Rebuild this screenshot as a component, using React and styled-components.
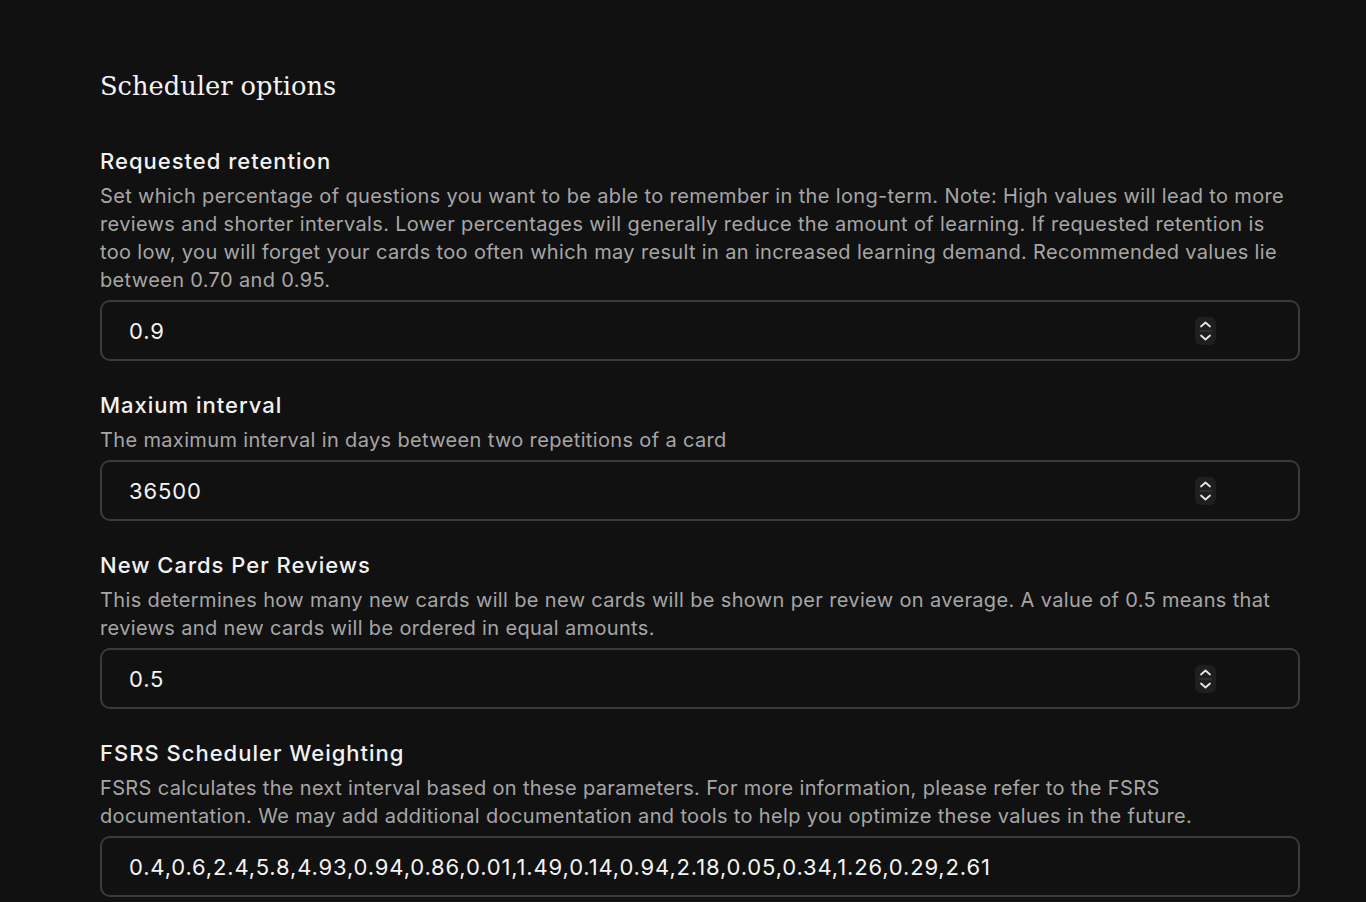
import styled, { createGlobalStyle } from "styled-components"

const GlobalStyle = createGlobalStyle`
   html, body {
      margin: 0;
      background: #111111;
   }
   body {
      font-family: Inter, "Noto Sans", sans-serif;
      color: #f2f2f2;
   }
`;

const Page = styled.div`
   min-height: 902px;
   padding: 66px 0 0 100px;
   box-sizing: border-box;
   background: #111111;
`;

const Content = styled.div`
   width: 1200px;
   display: flex;
   flex-direction: column;
   gap: 29px;
`;

const Heading = styled.h2`
   margin: 0 0 11px 0;
   font-family: "DejaVu Serif", "Liberation Serif", serif;
   font-weight: normal;
   font-size: 25.7px;
   line-height: 40px;
   color: #f4f4f4;
`;

const Field = styled.div`
   display: flex;
   flex-direction: column;
`;

const Label = styled.div`
   font-size: 22px;
   font-weight: 500;
   line-height: 30px;
   letter-spacing: 1px;
   color: #f2f2f2;
   margin-bottom: 6px;
`;

const Desc = styled.p`
   margin: 0 0 6px 0;
   font-size: 20px;
   line-height: 28px;
   letter-spacing: 0.35px;
   color: #a6a6a6;
`;

const InputBox = styled.div`
   position: relative;
   height: 61px;
   box-sizing: border-box;
   border: 2px solid #3b3b3b;
   border-radius: 10px;
   display: flex;
   align-items: center;
   padding-left: 27px;
   font-size: 22px;
   letter-spacing: 0.85px;
   color: #f4f4f4;
`;

const Spinner = styled.div`
   position: absolute;
   right: 82px;
   top: 50%;
   transform: translateY(-50%);
   width: 21px;
   height: 28px;
   border-radius: 6px;
   background: #1f1f1f;
   display: flex;
   align-items: center;
   justify-content: center;
`;

const Stepper = () => (
   <Spinner>
      <svg width="21" height="28" viewBox="0 0 21 28" fill="none">
         <path d="M6 9.5 L10.5 5.5 L15 9.5" stroke="#e6e6e6" strokeWidth="1.8" strokeLinecap="round" strokeLinejoin="round" />
         <path d="M4 14 H17" stroke="#3a3a3a" strokeWidth="1.2" />
         <path d="M6 18.5 L10.5 22.5 L15 18.5" stroke="#e6e6e6" strokeWidth="1.8" strokeLinecap="round" strokeLinejoin="round" />
      </svg>
   </Spinner>
);

const fields = [
   {
      label: "Requested retention",
      desc: "Set which percentage of questions you want to be able to remember in the long-term. Note: High values will lead to more reviews and shorter intervals. Lower percentages will generally reduce the amount of learning. If requested retention is too low, you will forget your cards too often which may result in an increased learning demand. Recommended values lie between 0.70 and 0.95.",
      value: "0.9",
      number: true,
   },
   {
      label: "Maxium interval",
      desc: "The maximum interval in days between two repetitions of a card",
      value: "36500",
      number: true,
   },
   {
      label: "New Cards Per Reviews",
      desc: "This determines how many new cards will be new cards will be shown per review on average. A value of 0.5 means that reviews and new cards will be ordered in equal amounts.",
      value: "0.5",
      number: true,
   },
   {
      label: "FSRS Scheduler Weighting",
      desc: "FSRS calculates the next interval based on these parameters. For more information, please refer to the FSRS documentation. We may add additional documentation and tools to help you optimize these values in the future.",
      value: "0.4,0.6,2.4,5.8,4.93,0.94,0.86,0.01,1.49,0.14,0.94,2.18,0.05,0.34,1.26,0.29,2.61",
      number: false,
   },
];

export default function App() {
   return (
      <Page>
         <GlobalStyle />
         <Content>
            <Heading>Scheduler options</Heading>
            {fields.map((f) => (
               <Field key={f.label}>
                  <Label>{f.label}</Label>
                  <Desc>{f.desc}</Desc>
                  <InputBox>
                     {f.value}
                     {f.number && <Stepper />}
                  </InputBox>
               </Field>
            ))}
         </Content>
      </Page>
   )
}
